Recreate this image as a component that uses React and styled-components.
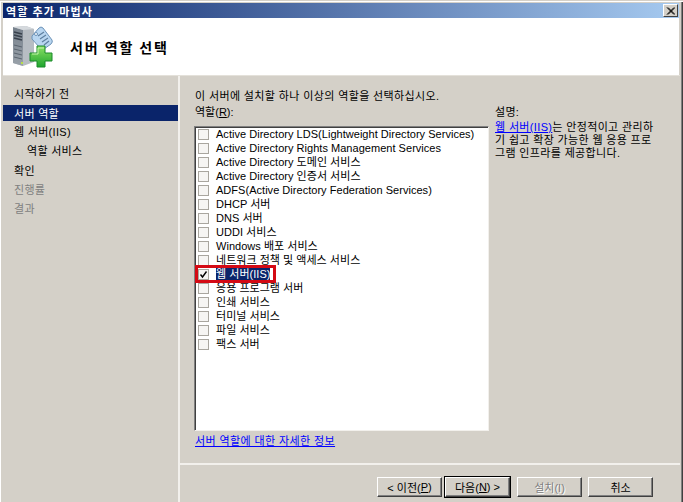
import React from "react";
import styled, { createGlobalStyle } from "styled-components";

const GlobalStyle = createGlobalStyle`
  html, body { margin: 0; padding: 0; background: #d4d0c8; overflow: hidden; }
  body {
    font-family: "Liberation Sans", "Noto Sans CJK KR", sans-serif;
    font-size: 11px;
    color: #000;
  }
`;

const Wizard = styled.div`
  width: 683px;
  height: 502px;
  box-sizing: border-box;
  padding: 3px 3px 0 3px;
  background: #d4d0c8;
  border-top: 1px solid #d4d0c8;
  box-shadow: inset 1px 1px 0 #fff, inset -1px 0 0 #404040, inset -2px 0 0 #808080;
  display: flex;
  flex-direction: column;
`;

const TitleBar = styled.div`
  height: 15px;
  margin-top: -1px;
  margin-right: 1px;
  padding: 0 1px 0 3px;
  display: flex;
  align-items: center;
  justify-content: space-between;
  background: linear-gradient(to right, #0a246a, #a6caf0);
`;

const TitleText = styled.span`
  color: #fff;
  font-weight: bold;
  font-size: 11px;
  letter-spacing: 1.1px;
`;

const CloseButton = styled.div`
  width: 15px;
  height: 13px;
  box-sizing: border-box;
  background: #d4d0c8;
  border: 1px solid;
  border-color: #fff #404040 #404040 #fff;
  display: flex;
  align-items: center;
  justify-content: center;
`;

const Header = styled.div`
  height: 57px;
  margin-right: 1px;
  flex-shrink: 0;
  background: #fff;
  display: flex;
  align-items: center;
  gap: 17px;
  padding-left: 10px;
  box-sizing: border-box;
`;

const HeaderTitle = styled.h1`
  margin: 0;
  font-size: 14px;
  font-weight: bold;
  letter-spacing: 1.9px;
  font-family: "Noto Sans CJK KR", sans-serif;
`;

const Body = styled.div`
  flex: 1;
  display: flex;
  min-height: 0;
  border-top: 1px solid #e4e1da;
`;

const Sidebar = styled.nav`
  width: 175px;
  flex-shrink: 0;
  padding-top: 7px;
  border-right: 2px solid #f2f0ec;
  display: flex;
  flex-direction: column;
`;

const NavItem = styled.div`
  height: 19.3px;
  display: flex;
  align-items: center;
  padding-left: ${(p) => (p.$indent ? 24 : 11)}px;
  color: ${(p) => (p.$disabled ? "#808080" : "#000")};
  ${(p) => p.$active && "background: #0a246a; color: #fff; height: 16px; margin: 3px 0 0;"}
  letter-spacing: 0.3px;
`;

const Main = styled.div`
  flex: 1;
  display: flex;
  flex-direction: column;
  min-width: 0;
`;

const Content = styled.div`
  flex: 1;
  display: grid;
  grid-template-columns: 294px 1fr;
  grid-template-rows: auto 1fr;
  column-gap: 6px;
  padding: 13px 0 0 15px;
  min-height: 0;
`;

const Lead = styled.div`
  grid-column: 1 / 3;
  height: 14px;
  line-height: 14px;
  letter-spacing: 0.38px;
`;

const ListColumn = styled.div`
  display: flex;
  flex-direction: column;
  min-height: 0;
  margin-left: -1px;
`;

const Label = styled.div`
  height: 14px;
  line-height: 14px;
  margin: 2px 0 7px 1px;
  u { text-decoration: underline; }
`;

const RoleList = styled.div`
  height: 305px;
  box-sizing: border-box;
  padding: 0 0 0 2px;
  background: #fff;
  border: 1px solid;
  border-color: #808080 #f2f0ec #f2f0ec #808080;
  box-shadow: inset 1px 1px 0 #404040;
  display: flex;
  flex-direction: column;
`;

const RoleRow = styled.div`
  height: 14px;
  flex-shrink: 0;
  display: flex;
  align-items: center;
  gap: 7px;
  padding-left: 1px;
  ${(p) =>
    p.$marked &&
    "outline: 3px solid #d40a14; outline-offset: -1px; width: 77px; box-sizing: border-box; position: relative; z-index: 1; background: #fff;"}
`;

const Check = styled.span`
  width: 11px;
  height: 11px;
  box-sizing: border-box;
  flex-shrink: 0;
  background: #f6f5f3;
  border: 1px solid #a9a69f;
  display: flex;
  align-items: center;
  justify-content: center;
`;

const RoleName = styled.span`
  white-space: nowrap;
  line-height: 13px;
  letter-spacing: 0.03px;
  ${(p) => p.$selected && "background: #0a246a; color: #fff;"}
`;

const InfoLink = styled.a`
  color: #0000ff;
  text-decoration: underline;
`;

const MoreLink = styled(InfoLink)`
  display: block;
  margin: 3px 0 0 1px;
  height: 14px;
  line-height: 14px;
  letter-spacing: 0.4px;
`;

const Description = styled.div`
  padding-top: 2px;
`;

const DescriptionLabel = styled.div`
  height: 14px;
  line-height: 14px;
  margin-bottom: 2px;
  letter-spacing: 0.3px;
`;

const DescriptionText = styled.div`
  width: 160px;
  line-height: 13px;
  letter-spacing: 0.35px;
  word-break: break-all;
`;

const Footer = styled.div`
  height: 39px;
  box-sizing: border-box;
  flex-shrink: 0;
  border-top: 2px solid #f2f0ec;
  display: flex;
  justify-content: flex-end;
  padding: 12px 27px 0 0;
  gap: 3px;
`;

const Button = styled.div`
  width: 65px;
  height: 20px;
  box-sizing: border-box;
  display: flex;
  align-items: center;
  justify-content: center;
  margin-left: ${(p) => p.$gap || 0}px;
  color: ${(p) => (p.$disabled ? "#808080" : "#000")};
  text-shadow: ${(p) => (p.$disabled ? "1px 1px 0 #fff" : "none")};
  border: 1px solid;
  border-color: #fff #404040 #404040 #fff;
  box-shadow: inset -1px -1px 0 #808080;
  ${(p) => p.$primary && "outline: 1px solid #000;"}
  u { text-decoration: underline; }
`;

const ROLES = [
  "Active Directory LDS(Lightweight Directory Services)",
  "Active Directory Rights Management Services",
  "Active Directory 도메인 서비스",
  "Active Directory 인증서 서비스",
  "ADFS(Active Directory Federation Services)",
  "DHCP 서버",
  "DNS 서버",
  "UDDI 서비스",
  "Windows 배포 서비스",
  "네트워크 정책 및 액세스 서비스",
  "웹 서버(IIS)",
  "응용 프로그램 서버",
  "인쇄 서비스",
  "터미널 서비스",
  "파일 서비스",
  "팩스 서버",
];

const WizardIcon = () => (
  <svg width="40" height="42" viewBox="0 0 40 42">
    <defs>
      <linearGradient id="plus" x1="0" x2="0" y1="0" y2="1">
        <stop offset="0" stopColor="#8be065" />
        <stop offset="1" stopColor="#1fa52e" />
      </linearGradient>
      <linearGradient id="face" x1="0" x2="0" y1="0" y2="1">
        <stop offset="0" stopColor="#77818c" />
        <stop offset="1" stopColor="#9aa2aa" />
      </linearGradient>
    </defs>
    <path d="M0 1 L13 0 L21 3 L21 36 L10 40 L0 37 Z" fill="#b7bdc3" />
    <path d="M0 1 L10 4 L10 40 L0 37 Z" fill="url(#face)" />
    <path d="M0 1 L13 0 L21 3 L10 4 Z" fill="#d5d9dd" />
    <path d="M1 6 L9 8 M1 9 L9 11 M1 12 L9 14" stroke="#39424c" strokeWidth="1.5" />
    <path d="M1 19 L9 21 M1 23 L9 25 M1 27 L9 29 M1 31 L9 33" stroke="#59636e" strokeWidth="1" />
    <rect x="8" y="36" width="2" height="2" fill="#b8e04a" />
    <path d="M19 10 L26 2 Q28 0 30 2 L39 14 Q40 16 38 18 L31 23 Q29 24 27 22 L19 13 Z" fill="#b9d6f0" stroke="#6d93b8" />
    <path d="M25 10 L31 6 M27 13 L33 9 M29 16 L35 12 M31 19 L36 15" stroke="#5e7f9f" strokeWidth="1.2" />
    <circle cx="23" cy="8" r="1.5" fill="#fff" stroke="#6d93b8" />
    <path d="M24 20 H32 V27 H39 V35 H32 V41 H24 V35 H17 V27 H24 Z" fill="url(#plus)" stroke="#1a8a2a" />
    <path d="M25 22 V28 H19 M25 22 H31" fill="none" stroke="#c4f4aa" />
  </svg>
);

export default function App() {
  return (
    <>
      <GlobalStyle />
      <Wizard>
        <TitleBar>
          <TitleText>역할 추가 마법사</TitleText>
          <CloseButton>
            <svg width="9" height="8" viewBox="0 0 9 8">
              <path d="M1 0.5 L8 7.5 M2 0.5 L9 7.5 M8 0.5 L1 7.5 M9 0.5 L2 7.5" stroke="#000" strokeWidth="1" />
            </svg>
          </CloseButton>
        </TitleBar>
        <Header>
          <WizardIcon />
          <HeaderTitle>서버 역할 선택</HeaderTitle>
        </Header>
        <Body>
          <Sidebar>
            <NavItem>시작하기 전</NavItem>
            <NavItem $active>서버 역할</NavItem>
            <NavItem>웹 서버(IIS)</NavItem>
            <NavItem $indent>역할 서비스</NavItem>
            <NavItem>확인</NavItem>
            <NavItem $disabled>진행률</NavItem>
            <NavItem $disabled>결과</NavItem>
          </Sidebar>
          <Main>
            <Content>
              <Lead>이 서버에 설치할 하나 이상의 역할을 선택하십시오.</Lead>
              <ListColumn>
                <Label>
                  역할(<u>R</u>):
                </Label>
                <RoleList>
                  {ROLES.map((role) => {
                    const on = role === "웹 서버(IIS)";
                    return (
                      <RoleRow key={role} $marked={on}>
                        <Check>
                          {on && (
                            <svg width="9" height="9" viewBox="0 0 9 9">
                              <path d="M1.5 4.5 L3.5 7 L7.5 1.5" fill="none" stroke="#000" strokeWidth="1.4" />
                            </svg>
                          )}
                        </Check>
                        <RoleName $selected={on}>{role}</RoleName>
                      </RoleRow>
                    );
                  })}
                </RoleList>
                <MoreLink href="#">서버 역할에 대한 자세한 정보</MoreLink>
              </ListColumn>
              <Description>
                <DescriptionLabel>설명:</DescriptionLabel>
                <DescriptionText>
                  <InfoLink href="#">웹 서버(IIS)</InfoLink>는 안정적이고 관리하기 쉽고 확장 가능한 웹 응용 프로그램 인프라를 제공합니다.
                </DescriptionText>
              </Description>
            </Content>
            <Footer>
              <Button>
                &lt; 이전(<u>P</u>)
              </Button>
              <Button $primary>
                다음(<u>N</u>) &gt;
              </Button>
              <Button $disabled $gap={4}>
                설치(I)
              </Button>
              <Button $gap={3}>취소</Button>
            </Footer>
          </Main>
        </Body>
      </Wizard>
    </>
  );
}
